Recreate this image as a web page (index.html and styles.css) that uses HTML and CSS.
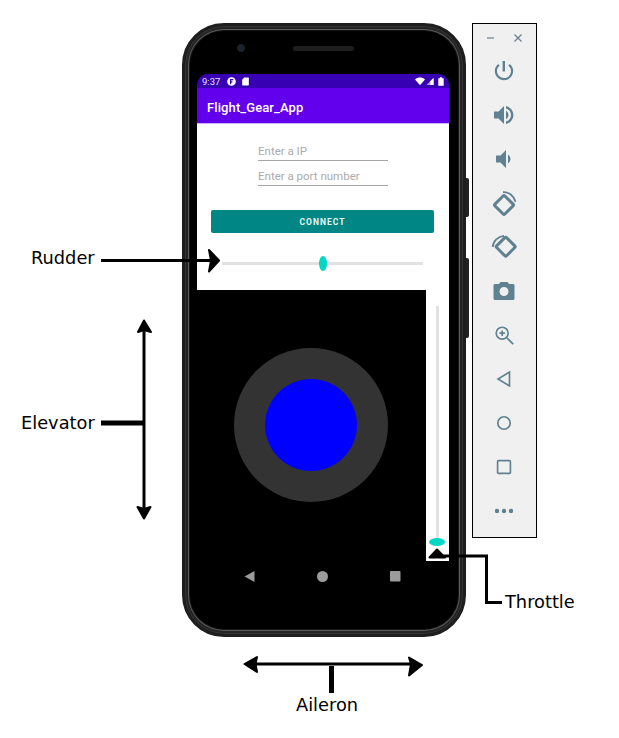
FILE: index.html
```html
<!DOCTYPE html>
<html lang="en">
<head>
  <meta charset="UTF-8" />
  <meta name="viewport" content="width=device-width, initial-scale=1.0"/>
  <title>Flight Gear App</title>
  <link rel="stylesheet" href="styles.css">
</head>
<body>
  <div class="stage">
    <div class="phone">
      <div class="side-btn power-btn"></div>
      <div class="side-btn volume-btn"></div>
      <div class="camera"></div>
      <div class="speaker"></div>

      <div class="screen">
        <div class="status-bar">
          <span class="clock">9:37</span>
          <svg class="status-icon" viewBox="0 0 10 10"><circle cx="5" cy="5" r="4.8" fill="#fff"/><path d="M4 8V3h3M4 5.500h2" fill="none" stroke="#3700b3" stroke-width="1.400"/></svg>
          <svg class="status-icon sd" viewBox="0 0 8 10"><path d="M2.500 .5h4.500a.8.8 0 0 1 .8.8v7.500a.8.8 0 0 1-.8.8H1a.8.8 0 0 1-.8-.8V3z" fill="#fff"/></svg>
          <span class="status-gap"></span>
          <svg class="status-icon wifi" viewBox="0 0 12 10"><path d="M0 2.600C3.400-.5 8.600-.5 12 2.600L6 9.600z" fill="#fff"/></svg>
          <svg class="status-icon signal" viewBox="0 0 10 10"><path d="M9.500 .5v9H.5z" fill="#a99fd0"/><path d="M5.500 4.500v5h4v-9z" fill="#fff"/></svg>
          <svg class="status-icon battery" viewBox="0 0 6 10"><path d="M1.800 .3h2.400v1H6v8.500H0V1.300h1.800z" fill="#fff"/></svg>
        </div>
        <div class="app-bar">Flight_Gear_App</div>

        <div class="form">
          <div class="field">Enter a IP</div>
          <div class="field">Enter a port number</div>
          <div class="connect-btn">CONNECT</div>
          <div class="h-slider">
            <div class="h-track"></div>
            <div class="h-thumb"></div>
          </div>
        </div>

        <div class="controls">
          <div class="joystick-area">
            <div class="joystick-base">
              <div class="joystick-top"></div>
            </div>
          </div>
          <div class="throttle-strip">
            <div class="v-track"></div>
            <div class="v-thumb"></div>
          </div>
        </div>

        <div class="nav-bar">
          <svg class="nav-icon" viewBox="0 0 11 11"><path d="M10.500 0v11L.5 5.500z"/></svg>
          <svg class="nav-icon" viewBox="0 0 11 11"><circle cx="5.500" cy="5.500" r="5.500"/></svg>
          <svg class="nav-icon" viewBox="0 0 11 11"><rect x="0" y="0" width="10.500" height="10.500" rx="1"/></svg>
        </div>
      </div>
    </div>

    <div class="toolbar">
      <div class="window-btns">
        <svg class="win-icon" viewBox="0 0 10 10"><path d="M1 5h7"/></svg>
        <svg class="win-icon" viewBox="0 0 10 10"><path d="M1.500 1.500l7 7M8.500 1.500l-7 7"/></svg>
      </div>
      <div class="tool">
        <svg viewBox="0 0 24 24"><path d="M13 2h-2.400v10.500H13zM17.800 4.900l-1.500 1.700C18 8 19 9.900 19 12c0 3.900-3.100 7-7 7s-7-3.100-7-7c0-2.100 1-4 2.600-5.400L6.200 4.900C4.200 6.600 2.800 9.100 2.800 12c0 5 4.100 9.200 9.200 9.200s9.200-4.200 9.200-9.200c0-2.900-1.400-5.400-3.400-7.100z"/></svg>
      </div>
      <div class="tool">
        <svg viewBox="0 0 24 24"><path d="M2 8.500v7h4.500l5.500 5.500V3L6.500 8.500zM14 7.800v8.400c1.500-.8 2.500-2.400 2.500-4.200S15.500 8.600 14 7.800zM14 3v2.400c2.900.9 5 3.500 5 6.600s-2.100 5.700-5 6.600V21c4.200-1 7.400-4.600 7.400-9S18.200 4 14 3z"/></svg>
      </div>
      <div class="tool">
        <svg viewBox="0 0 24 24"><path d="M4 8.500v7h4.500L14 21V3L8.500 8.500zM16 7.800v8.400c1.500-.8 2.500-2.400 2.500-4.200S17.500 8.600 16 7.800z"/></svg>
      </div>
      <div class="tool">
        <svg class="outline" viewBox="0 0 24 24"><rect x="5" y="7" width="14" height="14" rx="1.200" transform="rotate(45 12 14)"/><path class="thin" d="M11 1.200c5.500-.5 11 3.500 12.500 9.500"/></svg>
      </div>
      <div class="tool">
        <svg class="outline" viewBox="0 0 24 24"><rect x="6.700" y="4.700" width="14" height="14" rx="1.200" transform="rotate(-45 13.700 11.700)"/><path class="thin" d="M.8 12C1 6 6 1.500 12 .8"/></svg>
      </div>
      <div class="tool">
        <svg viewBox="0 0 24 24"><path fill-rule="evenodd" d="M8.500 3h7l1.500 2h4a1.500 1.500 0 0 1 1.500 1.500v13A1.500 1.500 0 0 1 21 21H3a1.500 1.500 0 0 1-1.500-1.500v-13A1.500 1.500 0 0 1 3 5h4zM12 8a4.500 4.500 0 1 0 0 9 4.500 4.500 0 0 0 0-9z"/></svg>
      </div>
      <div class="tool">
        <svg class="outline slim" viewBox="0 0 24 24"><circle cx="10" cy="10" r="6.500"/><path d="M15 15l7 7"/><path class="thin" d="M7 10h6M10 7v6"/></svg>
      </div>
      <div class="tool">
        <svg class="outline slim" viewBox="0 0 24 24"><path d="M18 4.500v15L5.500 12z"/></svg>
      </div>
      <div class="tool">
        <svg class="outline slim" viewBox="0 0 24 24"><circle cx="12" cy="12" r="6.800"/></svg>
      </div>
      <div class="tool">
        <svg class="outline slim" viewBox="0 0 24 24"><rect x="5" y="5" width="14" height="14" rx="1"/></svg>
      </div>
      <div class="tool">
        <svg viewBox="0 0 24 24"><circle cx="5" cy="12" r="2.200"/><circle cx="12" cy="12" r="2.200"/><circle cx="19" cy="12" r="2.200"/></svg>
      </div>
    </div>
  </div>

  <!-- annotations drawn on top of the device -->
  <svg class="arrows" viewBox="0 0 619 738">
    <path class="line" d="M101 260.500H212"/>
    <path class="head" d="M209 250L219 260.500L209 271.500L211 260.500z"/>

    <path class="line" d="M144 328V510"/>
    <path class="head" d="M144 320.500L151 332L144 330L138 332z"/>
    <path class="head" d="M137.500 507L144 509L150.500 507L144 518.500z"/>
    <path class="line thick" d="M101 423H144"/>

    <path class="line" d="M250 664H416"/>
    <path class="head" d="M244.500 664L257 657L255.500 664L257 672z"/>
    <path class="head" d="M422 665L409 657.500L411 664L409 675.500z"/>
    <path class="line thick" d="M331.500 666V693"/>

    <path class="head" d="M437 549.500L445 557.500H429.500z"/>
    <path class="line" d="M440 556H486.500V602.500H502"/>
  </svg>
  <span class="label rudder">Rudder</span>
  <span class="label elevator">Elevator</span>
  <span class="label throttle">Throttle</span>
  <span class="label aileron">Aileron</span>
</body>
</html>
```

FILE: styles.css
```css
* {
  box-sizing: border-box;
}

body {
  margin: 0;
  width: 619px;
  height: 738px;
  background: white;
  overflow: hidden;
  position: relative;
  font-family: Roboto, sans-serif;
}

.stage {
  display: flex;
  align-items: flex-start;
  gap: 6px;
  padding: 23px 0 0 182px;
}

/* phone */
.phone {
  position: relative;
  width: 284px;
  height: 614px;
  flex: none;
  padding: 48px 14px 0 12px;
  background: black;
  border: 3px solid #1e1e1e;
  border-radius: 42px;
  box-shadow: inset 0 0 0 1px #333, inset 0 0 0 3px #242424, inset 0 0 0 4px #5a5a5a, inset 0 0 0 5px #161616;
}

.side-btn {
  position: absolute;
  left: 281px;
  width: 3px;
  background: #222;
  border-radius: 0 2px 2px 0;
}

.power-btn {
  top: 152px;
  height: 39px;
}

.volume-btn {
  top: 232px;
  height: 80px;
}

.camera {
  position: absolute;
  left: 52px;
  top: 18px;
  width: 8px;
  height: 8px;
  border-radius: 50%;
  background: #1c2433;
  border: 1px solid #222;
}

.speaker {
  position: absolute;
  left: 108px;
  top: 20px;
  width: 61px;
  height: 5px;
  border-radius: 3px;
  background: #1e1e1e;
}

.screen {
  width: 252px;
  height: 517px;
  display: flex;
  flex-direction: column;
  background: black;
  border-radius: 11px 11px 0 0;
  overflow: hidden;
}

.status-bar {
  height: 14px;
  flex: none;
  display: flex;
  align-items: center;
  padding: 0 5px 0 5px;
  background: #3700b3;
  color: #e8e0f5;
  font-size: 9.500px;
}

.clock {
  margin-right: 7px;
}

.status-icon {
  width: 9px;
  height: 9px;
}

.status-icon.sd {
  width: 7px;
  margin-left: 6px;
}

.status-icon.wifi {
  width: 10px;
}

.status-icon.signal {
  width: 8px;
  margin-left: 1px;
}

.status-icon.battery {
  width: 6px;
  margin-left: 4px;
}

.status-gap {
  flex: 1;
}

.app-bar {
  height: 36px;
  flex: none;
  display: flex;
  align-items: center;
  padding: 3px 0 0 10px;
  background: #6200ee;
  border-bottom: 1px solid #c9b3f5;
  color: white;
  font-size: 13px;
  font-weight: 500;
  letter-spacing: 0.100px;
}

.form {
  height: 166px;
  flex: none;
  background: white;
  padding-top: 12px;
}

.field {
  width: 130px;
  height: 25px;
  margin-left: 61px;
  display: flex;
  align-items: flex-end;
  border-bottom: 1px solid #a6a6a6;
  color: #ababab;
  font-size: 11.500px;
  line-height: 17px;
}

.connect-btn {
  width: 223px;
  height: 23px;
  margin: 24px 0 0 14px;
  display: flex;
  align-items: center;
  justify-content: center;
  background: #008785;
  border-radius: 2px;
  color: #e9f5f4;
  font-size: 8.500px;
  font-weight: 700;
  letter-spacing: 1px;
}

.h-slider {
  position: relative;
  height: 15px;
  margin: 23px 0 0 25px;
  width: 201px;
  display: flex;
  align-items: center;
}

.h-track {
  width: 100%;
  height: 3px;
  background: #e2e2e2;
}

.h-thumb {
  position: absolute;
  left: 96.500px;
  top: 0;
  width: 8px;
  height: 15px;
  border-radius: 50%;
  background: #00d8c4;
}

.controls {
  display: flex;
  height: 271px;
  flex: none;
}

.joystick-area {
  width: 229px;
  padding: 58px 0 0 37px;
}

.joystick-base {
  width: 154px;
  height: 154px;
  border-radius: 50%;
  background: #333;
  display: flex;
  align-items: center;
  justify-content: center;
}

.joystick-top {
  width: 92px;
  height: 92px;
  border-radius: 50%;
  background: #0000ff;
}

.throttle-strip {
  position: relative;
  width: 23px;
  background: white;
  display: flex;
  justify-content: center;
  padding-top: 16px;
}

.v-track {
  width: 3px;
  height: 232px;
  margin-right: 1px;
  background: #e2e2e2;
}

.v-thumb {
  position: absolute;
  left: 3px;
  top: 248px;
  width: 16px;
  height: 8px;
  border-radius: 50%;
  background: #00d8c4;
}

.nav-bar {
  display: flex;
  justify-content: space-between;
  align-items: center;
  height: 30px;
  padding: 0 48px 0 47px;
}

.nav-icon {
  width: 11px;
  height: 11px;
  fill: #9b9b9b;
}

/* emulator side toolbar */
.toolbar {
  width: 65px;
  height: 515px;
  flex: none;
  background: #f0f0f0;
  border: 1px solid black;
  display: flex;
  flex-direction: column;
}

.window-btns {
  height: 25px;
  display: flex;
  justify-content: center;
  gap: 17px;
  padding-top: 9px;
}

.win-icon {
  width: 10px;
  height: 10px;
  fill: none;
  stroke: #6a7f8a;
  stroke-width: 1.200;
}

.tool {
  height: 44px;
  flex: none;
  display: flex;
  align-items: center;
  justify-content: center;
  padding-right: 1px;
}

.tool svg {
  width: 24px;
  height: 24px;
  fill: #5f8191;
}

.tool .outline {
  fill: none;
  stroke: #5f8191;
  stroke-width: 3;
  overflow: visible;
}

.tool .outline.slim {
  stroke-width: 1.800;
  width: 22px;
  height: 22px;
}

.tool .thin {
  stroke-width: 1.800;
}

/* annotations */
.arrows {
  position: absolute;
  left: 0;
  top: 0;
  width: 619px;
  height: 738px;
  pointer-events: none;
}

.line {
  fill: none;
  stroke: black;
  stroke-width: 3;
}

.line.thick {
  stroke-width: 5;
}

.head {
  fill: black;
  stroke: black;
  stroke-width: 2;
  stroke-linejoin: round;
}

.label {
  position: absolute;
  font-family: "DejaVu Sans", sans-serif;
  font-size: 17.800px;
  line-height: 20px;
  color: black;
}

.rudder {
  left: 31px;
  top: 248px;
}

.elevator {
  left: 21px;
  top: 413px;
}

.throttle {
  left: 505px;
  top: 592px;
}

.aileron {
  left: 296px;
  top: 695px;
}
```
